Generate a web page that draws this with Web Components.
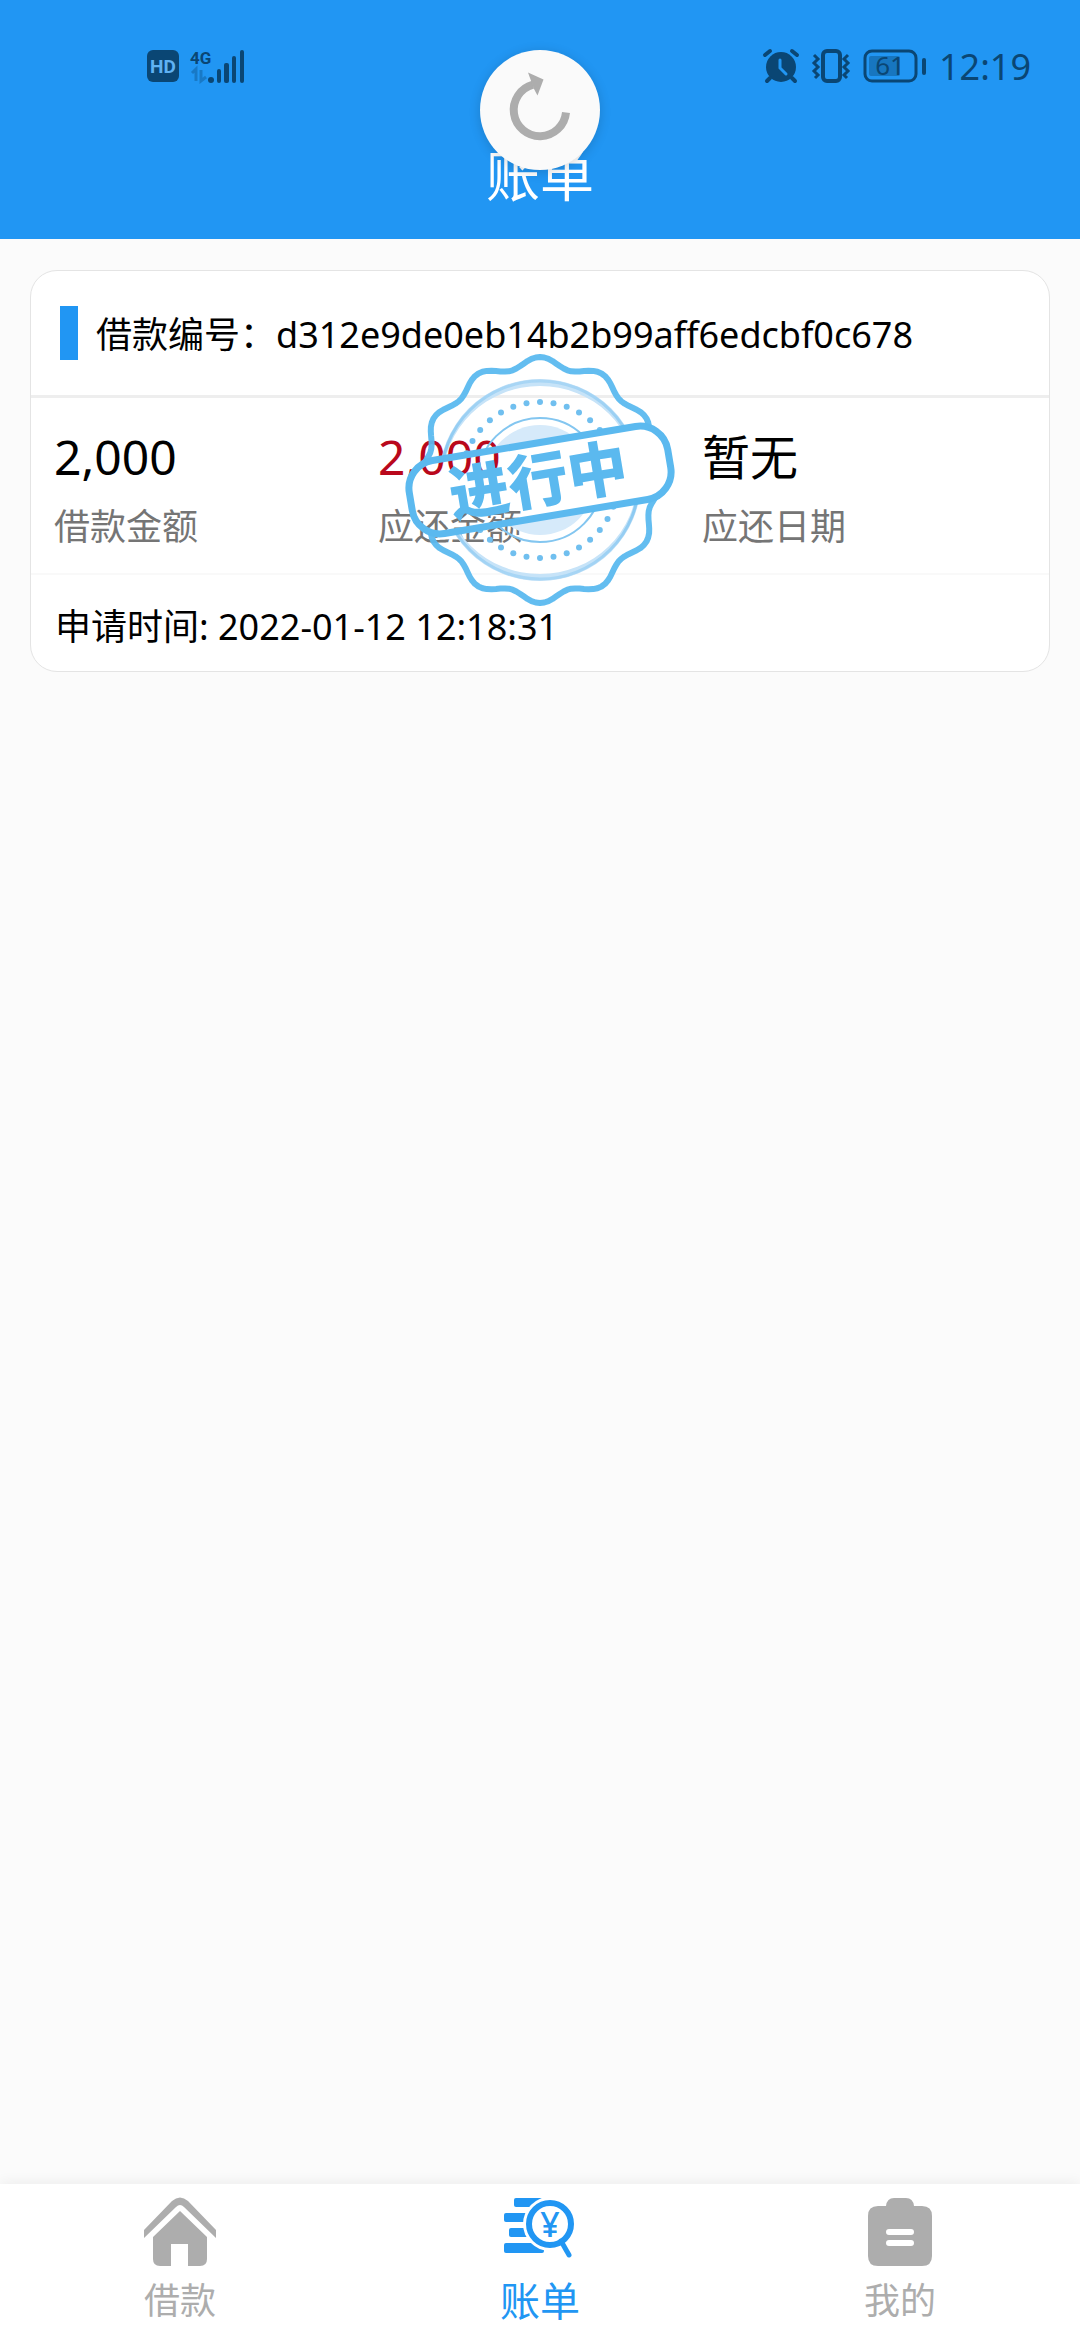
<!DOCTYPE html>
<html lang="zh-CN">
<head>
<meta charset="utf-8">
<meta name="viewport" content="width=device-width, initial-scale=1">
<title>账单</title>
<style>
    body {
        margin: 0;
        background: #fbfbfb;
        color: #000;
        font-family: "Noto Sans", "Noto Sans CJK SC", sans-serif;
        --primary: #2196f3;
        --muted: #757575;
        --idle: #adadad;
        --line: #eeeeee;
    }
</style>
</head>
<body>
<loan-app>
    <app-header slot="header" heading="账单">
        <status-bar time="12:19" battery="61"></status-bar>
    </app-header>
    <bill-card number="d312e9de0eb14b2b99aff6edcbf0c678" applied="2022-01-12 12:18:31">
        <bill-stat label="借款金额">2,000</bill-stat>
        <bill-stat label="应还金额" due>2,000</bill-stat>
        <bill-stat label="应还日期">暂无</bill-stat>
        <bill-stamp slot="stamp" text="进行中"></bill-stamp>
    </bill-card>
    <tab-bar slot="tabs">
        <tab-item icon="home" href="#loan">借款</tab-item>
        <tab-item icon="bill" href="#bill" active>账单</tab-item>
        <tab-item icon="mine" href="#mine">我的</tab-item>
    </tab-bar>
</loan-app>

<script>
class LoanApp extends HTMLElement {
    connectedCallback() {
        this.attachShadow({ mode: "open" }).innerHTML = `
            <style>
                :host { display: flex; flex-direction: column; min-height: 100vh; }
                main { flex: 1; padding: 31px 30px; }
            </style>
            <slot name="header"></slot>
            <main><slot></slot></main>
            <slot name="tabs"></slot>
            `
    }
}

class AppHeader extends HTMLElement {
    connectedCallback() {
        this.attachShadow({ mode: "open" }).innerHTML = `
            <style>
                :host { display: block; position: relative; background: var(--primary); }
                h1 {
                    margin: 0;
                    padding: 8px 0 27px;
                    color: #fff;
                    font-size: 54px;
                    line-height: 72px;
                    font-weight: 400;
                    text-align: center;
                }
                /* pull-to-refresh spinner, floats over the title */
                .refresh {
                    position: absolute;
                    top: 50px;
                    left: 50%;
                    width: 120px;
                    height: 120px;
                    margin-left: -60px;
                    border-radius: 50%;
                    background: #fafafa;
                    box-shadow: 0 2px 12px rgba(0, 0, 0, .16);
                }
                svg { display: block; }
            </style>
            <slot></slot>
            <h1>${this.getAttribute("heading")}</h1>
            <div class="refresh">
                <svg width="120" height="120" viewBox="-60 -60 120 120">
                    <path d="M26 2.500A26.200 26.200 0 1 1 -7 -25.300" fill="none" stroke="#adadad" stroke-width="8"/>
                    <path d="M-12 -37.500L3.500 -30.500L-2.500 -14.500L-6 -21Z" fill="#adadad"/>
                </svg>
            </div>
            `
    }
}

class StatusBar extends HTMLElement {
    connectedCallback() {
        this.attachShadow({ mode: "open" }).innerHTML = `
            <style>
                :host {
                    display: flex;
                    justify-content: space-between;
                    align-items: center;
                    height: 132px;
                    padding: 0 49px 0 147px;
                    color: #0a4674;
                }
                div { display: flex; align-items: center; }
                .left { gap: 12px; }
                .right { gap: 12px; }
                svg { display: block; overflow: visible; }
                time { font-size: 36px; line-height: 48px; padding-top: 2px; }
                text { font-family: Roboto, sans-serif; }
                .level { font-family: "Noto Sans", sans-serif; }
            </style>
            <div class="left">
                <svg width="32" height="32" viewBox="0 0 32 32">
                    <rect width="32" height="32" rx="6" fill="currentColor"/>
                    <text x="16" y="23" font-size="19" font-weight="700" text-anchor="middle" fill="#5fb2f3">HD</text>
                </svg>
                <svg width="54" height="36" viewBox="0 0 54 36" fill="currentColor">
                    <text x="-1" y="16" font-size="17" font-weight="700">4G</text>
                    <path d="M1 25l4-4v12M10 22v11l5-4" fill="none" stroke="currentColor" stroke-width="3" opacity=".35"/>
                    <circle cx="20" cy="32" r="3"/>
                    <rect x="26" y="21" width="4" height="14" rx="2"/>
                    <rect x="33" y="15" width="5" height="20" rx="2"/>
                    <rect x="41" y="8" width="4" height="27" rx="2"/>
                    <rect x="49" y="2" width="4" height="33" rx="2"/>
                </svg>
            </div>
            <div class="right">
                <svg width="36" height="34" viewBox="0 0 36 34" fill="none" stroke="currentColor" stroke-linecap="round">
                    <circle cx="18" cy="18" r="15" fill="currentColor" stroke="none"/>
                    <path d="M2 6l5-4M34 6l-5-4M7 29l-3 3M29 29l3 3" stroke-width="4"/>
                    <path d="M17 11v8l6 6" stroke="#2196f3" stroke-width="3"/>
                </svg>
                <svg width="40" height="34" viewBox="0 0 40 34" fill="none" stroke="currentColor">
                    <rect x="12" y="2" width="17" height="30" rx="4" stroke-width="4"/>
                    <path d="M3 6l4 4l-4 4l4 4l-4 4l4 4l-3 3M37 6l-4 4l4 4l-4 4l4 4l-4 4l3 3" stroke-width="3"/>
                </svg>
                <svg width="64" height="34" viewBox="0 0 64 34">
                    <rect x="2" y="2" width="51" height="30" rx="7" fill="none" stroke="currentColor" stroke-width="3"/>
                    <rect x="6" y="7" width="31" height="20" rx="2" fill="currentColor" opacity=".4"/>
                    <rect x="59" y="9" width="4" height="17" rx="2" fill="currentColor"/>
                    <text class="level" x="27" y="26" font-size="26" text-anchor="middle" fill="currentColor">${this.getAttribute("battery")}</text>
                </svg>
                <time>${this.getAttribute("time")}</time>
            </div>
            `
    }
}

class BillCard extends HTMLElement {
    connectedCallback() {
        this.attachShadow({ mode: "open" }).innerHTML = `
            <style>
                :host {
                    display: block;
                    position: relative;
                    border: 1px solid #e4e4e4;
                    border-radius: 27px;
                    background: #fff;
                }
                header {
                    display: flex;
                    align-items: center;
                    gap: 18px;
                    padding: 35px 29px;
                    border-bottom: 3px solid var(--line);
                }
                .mark { width: 18px; height: 54px; background: var(--primary); }
                h2 { margin: 0; padding-top: 4px; font-size: 36px; line-height: 48px; font-weight: 400; }
                .stats {
                    display: grid;
                    grid-template-columns: repeat(3, 1fr);
                    padding: 27px 23px 22px;
                    border-bottom: 2px solid #f9f9f9;
                }
                footer { padding: 28px 24px 20px; font-size: 36px; line-height: 48px; }
                ::slotted(bill-stamp) { position: absolute; top: 74px; left: 50%; margin-left: -140px; }
            </style>
            <header>
                <div class="mark"></div>
                <h2>借款编号：${this.getAttribute("number")}</h2>
            </header>
            <div class="stats"><slot></slot></div>
            <footer>申请时间: ${this.getAttribute("applied")}</footer>
            <slot name="stamp"></slot>
            `
    }
}

class BillStat extends HTMLElement {
    connectedCallback() {
        this.attachShadow({ mode: "open" }).innerHTML = `
            <style>
                :host { display: flex; flex-direction: column; gap: 14px; }
                :host([due]) .value { color: #b9081c; }
                .value { font-size: 48px; line-height: 64px; }
                .label { font-size: 36px; line-height: 48px; color: var(--muted); }
            </style>
            <div class="value"><slot></slot></div>
            <div class="label">${this.getAttribute("label")}</div>
            `
    }
}

class BillStamp extends HTMLElement {
    connectedCallback() {
        this.attachShadow({ mode: "open" }).innerHTML = `
            <style>
                :host { display: block; pointer-events: none; }
                svg { display: block; }
                text { font-family: "Noto Sans CJK SC", sans-serif; font-size: 60px; font-weight: 900; }
            </style>
            <svg width="280" height="270" viewBox="-140 -135 280 270" fill="none" stroke="#5bb9ef">
                <defs>
                    <mask id="outside" maskUnits="userSpaceOnUse" x="-140" y="-135" width="280" height="270">
                        <rect x="-140" y="-135" width="280" height="270" fill="#fff" stroke="none"/>
                        <rect x="-131" y="-37" width="262" height="74" rx="28" fill="#000" stroke="none" transform="rotate(-9.500)"/>
                    </mask>
                    <linearGradient id="ring" x1="0" y1="0" x2="0" y2="1">
                        <stop offset="0" stop-color="#a9d6f5"/>
                        <stop offset=".5" stop-color="#7fc4f0"/>
                        <stop offset="1" stop-color="#a9d6f5"/>
                    </linearGradient>
                </defs>
                <g mask="url(#outside)">
                    <path d="${this.scallop(12, 118, 5)}" stroke-width="6" stroke-linejoin="round" opacity=".95"/>
                    <path fill-rule="evenodd" stroke="none" fill="#c6e3f8" d="M-101 0a101 101 0 1 0 202 0a101 101 0 1 0 -202 0ZM-97 0a97 94 0 1 0 194 0a97 94 0 1 0 -194 0Z"/>
                    <circle r="99" stroke="url(#ring)" stroke-width="3"/>
                    ${this.dots(36, 78)}
                    <circle r="62" stroke="#83c6f0" stroke-width="2"/>
                    <circle r="55" fill="#d6eafa" stroke="none"/>
                </g>
                <g transform="rotate(-9.500)">
                    <rect x="-131" y="-37" width="262" height="74" rx="28" stroke-width="7"/>
                    <text y="22" x="-2" text-anchor="middle" fill="#5bb9ef" stroke="none">${this.getAttribute("text")}</text>
                </g>
            </svg>
            `
    }

    /**
     * Closed wavy outline with the given number of lobes.
     */
    scallop(lobes, radius, depth) {
        const points = [];
        for (let deg = 0; deg < 360; deg += 2) {
            const t = deg * Math.PI / 180;
            const r = radius + depth * Math.cos(lobes * t);
            points.push(`${(r * Math.sin(t)).toFixed(1)} ${(-r * Math.cos(t)).toFixed(1)}`);
        }
        return "M" + points.join("L") + "Z";
    }

    dots(count, radius) {
        return Array.from({ length: count }, (_, i) => {
            const t = i * 2 * Math.PI / count;
            return `<circle cx="${(radius * Math.sin(t)).toFixed(1)}" cy="${(-radius * Math.cos(t)).toFixed(1)}" r="3" fill="#70bfef" stroke="none"/>`;
        }).join('');
    }
}

class TabBar extends HTMLElement {
    connectedCallback() {
        this.attachShadow({ mode: "open" }).innerHTML = `
            <style>
                :host { display: block; background: #fff; box-shadow: 0 -2px 12px rgba(0, 0, 0, .06); }
                nav { display: grid; grid-template-columns: repeat(3, 1fr); }
            </style>
            <nav><slot></slot></nav>
            `
    }
}

const tabIcons = {
    home: `
        <path d="M0 42V34L28 5Q36 -2 44 5L72 34V42L40 11Q36 7 32 11Z"/>
        <path d="M36 15L63 41V63Q63 70 56 70H44V48H27V70H16Q9 70 9 63V41Z"/>`,
    bill: `
        <mask id="lens" maskUnits="userSpaceOnUse" x="0" y="0" width="72" height="72">
            <rect width="72" height="72" fill="#fff"/>
            <circle cx="46" cy="28" r="27" fill="#000"/>
        </mask>
        <g mask="url(#lens)">
            <rect x="10" y="2" width="28" height="9" rx="2"/>
            <rect y="17" width="30" height="9" rx="2"/>
            <rect x="5" y="32" width="30" height="9" rx="2"/>
            <rect y="47" width="40" height="10" rx="2"/>
        </g>
        <circle cx="46" cy="28" r="21" fill="none" stroke="currentColor" stroke-width="6"/>
        <path d="M57 45L65 59" stroke="currentColor" stroke-width="5" stroke-linecap="round"/>
        <text x="46" y="41" font-size="34" font-weight="500" text-anchor="middle">¥</text>`,
    mine: `
        <path d="M14 10H22Q23 2 30 2H42Q49 2 50 10H58Q68 10 68 20V60Q68 70 58 70H14Q4 70 4 60V20Q4 10 14 10Z"/>
        <path d="M25 36H47M25 47H47" stroke="#fff" stroke-width="6" stroke-linecap="round"/>`,
}

class TabItem extends HTMLElement {
    connectedCallback() {
        this.attachShadow({ mode: "open" }).innerHTML = `
            <style>
                :host { display: block; color: var(--idle); font-size: 36px; }
                :host([active]) { color: var(--primary); font-size: 40px; }
                a {
                    display: flex;
                    flex-direction: column;
                    align-items: center;
                    gap: 5px;
                    padding: 12px 0 11px;
                    color: inherit;
                    line-height: 56px;
                    text-decoration: none;
                }
                svg { display: block; }
            </style>
            <a href="${this.getAttribute("href")}">
                <svg width="72" height="72" viewBox="0 0 72 72" fill="currentColor">${tabIcons[this.getAttribute("icon")]}</svg>
                <span><slot></slot></span>
            </a>
            `
    }
}

customElements.define("loan-app", LoanApp)
customElements.define("app-header", AppHeader)
customElements.define("status-bar", StatusBar)
customElements.define("bill-card", BillCard)
customElements.define("bill-stat", BillStat)
customElements.define("bill-stamp", BillStamp)
customElements.define("tab-bar", TabBar)
customElements.define("tab-item", TabItem)
</script>
</body>
</html>
